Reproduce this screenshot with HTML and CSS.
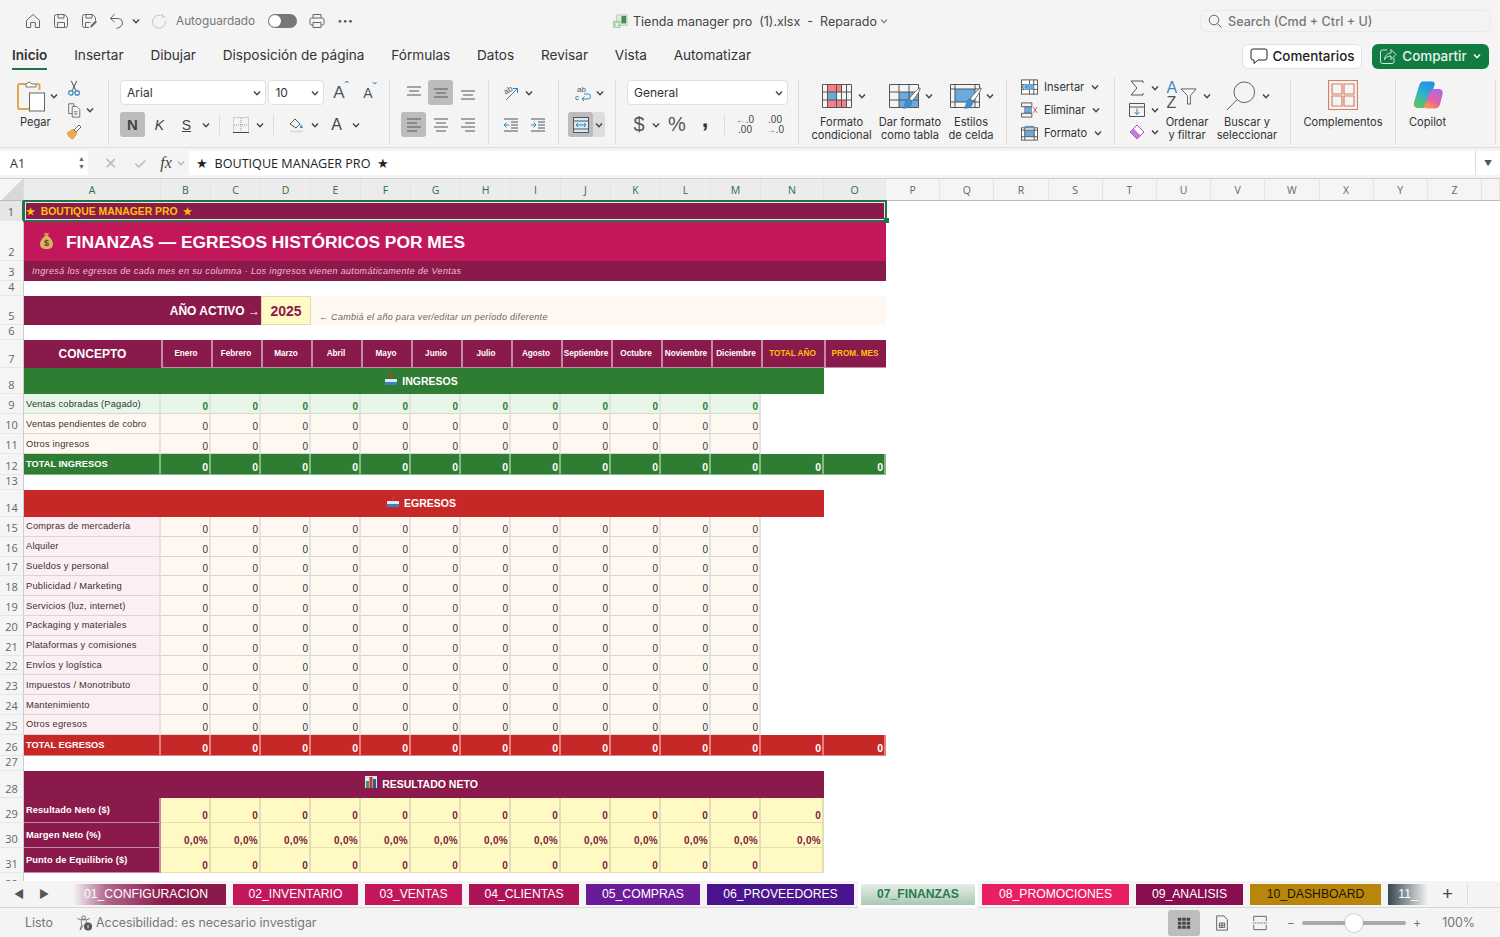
FILE: index.html
```html
<!DOCTYPE html>
<html lang="es">
  <head>
    <meta charset="UTF-8" />
    <title>Tienda manager pro (1).xlsx - Reparado</title>
    <link rel="stylesheet" href="styles.css">
  </head>
  <body>
    <svg class="defs" width="0" height="0">
      <symbol id="ch" viewBox="0 0 10 10"><path d="M2 3.5 5 6.8 8 3.5" fill="none" stroke="#444" stroke-width="1.4"/></symbol>
      <symbol id="al-top" viewBox="0 0 16 16"><path d="M1 2h14M3 6h10M1 10h14" stroke="#555" fill="none"/></symbol>
      <symbol id="al-mid" viewBox="0 0 16 16"><path d="M1 4h14M3 8h10M1 12h14" stroke="#555" fill="none"/></symbol>
      <symbol id="al-bot" viewBox="0 0 16 16"><path d="M1 6h14M3 10h10M1 14h14" stroke="#555" fill="none"/></symbol>
      <symbol id="al-left" viewBox="0 0 16 16"><path d="M1 2h14M1 6h10M1 10h14M1 14h10" stroke="#555" fill="none"/></symbol>
      <symbol id="al-center" viewBox="0 0 16 16"><path d="M1 2h14M3 6h10M1 10h14M3 14h10" stroke="#555" fill="none"/></symbol>
      <symbol id="al-right" viewBox="0 0 16 16"><path d="M1 2h14M5 6h10M1 10h14M5 14h10" stroke="#555" fill="none"/></symbol>
      <symbol id="brush" viewBox="0 0 20 24"><path d="M18 1c1 1-4 9-8 13l-3-2C10 8 16 1 18 1z" fill="#fff" stroke="#666"/><path d="M7 12l3 3c0 4-4 7-9 6 3-2 1-8 6-9z" fill="#3f8fcf" stroke="#3a78b0" stroke-width=".6"/></symbol>
    </svg>

    <header class="titlebar">
      <div class="quick">
        <svg class="ic16" viewBox="0 0 16 16"><path d="M1.5 7.5 8 1.5l6.5 6v7h-4.200v-5H5.700v5H1.500z" fill="none" stroke="#666"/></svg>
        <svg class="ic16" viewBox="0 0 16 16"><path d="M1.500 3.500a2 2 0 0 1 2-2h8l3 3v8a2 2 0 0 1-2 2h-9a2 2 0 0 1-2-2zM5 1.500v3.500h6V1.500M4.500 14.500V9.500h7v5" fill="none" stroke="#666"/></svg>
        <svg class="ic16" viewBox="0 0 16 16"><path d="M8 14.500H3.500a2 2 0 0 1-2-2v-9a2 2 0 0 1 2-2h8l3 3v3M5 1.500v3.500h6V1.500M4.500 14V9.500h5" fill="none" stroke="#666"/><path d="M9 15l1-3 4.500-4.500 1.500 1.500-4.500 4.500z" fill="#666"/></svg>
        <svg class="ic16 undo" viewBox="0 0 16 16"><path d="M5.500 1 1.500 5.500l4 3.500M1.500 5.500h8a4.500 4.500 0 0 1 1.500 8.500l-3.500 1.500" fill="none" stroke="#666"/></svg>
        <svg class="ch"><use href="#ch"/></svg>
        <svg class="ic16 redo" viewBox="0 0 16 16"><path d="M12 3.500A6.500 6.500 0 1 0 14.500 8M11.500 1v3h3" fill="none" stroke="#c4c4c4"/></svg>
        <span class="autosave">Autoguardado</span>
        <span class="toggle"><span class="knob"></span></span>
        <svg class="ic16 print" viewBox="0 0 16 16"><path d="M4 5V1.500h8V5M4 12H2.500a1.500 1.500 0 0 1-1.500-1.500V6.500A1.500 1.500 0 0 1 2.500 5h11A1.500 1.500 0 0 1 15 6.500v4a1.500 1.500 0 0 1-1.500 1.500H12M4 9.500h8v5H4z" fill="none" stroke="#666"/></svg>
        <span class="dots">···</span>
      </div>
      <div class="doc-title">
        <svg class="xl" viewBox="0 0 16 16"><rect x="4" y="1" width="11" height="11" fill="#dfe9df" stroke="#9ab59f" stroke-width=".6"/><rect x="9" y="2" width="5" height="8" fill="#3d8f58"/><rect x="0" y="7" width="8" height="8" fill="#a7d3b0"/><text x="2" y="14" class="xl-x">x</text></svg>
        <span>Tienda manager pro&nbsp; (1).xlsx&nbsp; -&nbsp; Reparado</span>
        <svg class="ch title-ch"><use href="#ch"/></svg>
      </div>
      <div class="search">
        <svg class="ic14" viewBox="0 0 14 14"><circle cx="6" cy="6" r="4.800" fill="none" stroke="#666"/><path d="m9.500 9.500 4 4" stroke="#666"/></svg>
        Search (Cmd + Ctrl + U)
      </div>
    </header>

    <nav class="menubar">
      <a class="on">Inicio</a>
      <a>Insertar</a>
      <a>Dibujar</a>
      <a>Disposición de página</a>
      <a>Fórmulas</a>
      <a>Datos</a>
      <a>Revisar</a>
      <a>Vista</a>
      <a>Automatizar</a>
      <div class="share">
        <button class="comments">
          <svg class="ic18" viewBox="0 0 18 18"><path d="M3 2h12a2 2 0 0 1 2 2v7a2 2 0 0 1-2 2H8l-4 3.500V13H3a2 2 0 0 1-2-2V4a2 2 0 0 1 2-2z" fill="none" stroke="#222"/></svg>
          Comentarios
        </button>
        <button class="compartir">
          <svg class="ic18" viewBox="0 0 18 18"><path d="M8 3H3.500A2 2 0 0 0 1.500 5v9.500a2 2 0 0 0 2 2H13a2 2 0 0 0 2-2V11M5.500 12.500C6 8 9 6 12 6V2.500l5 5-5 5V9c-3 0-5 1-6.500 3.500z" fill="none" stroke="#d6ebdd"/></svg>
          Compartir
          <svg class="ch light"><use href="#ch"/></svg>
        </button>
      </div>
    </nav>

    <section class="ribbon">
      <div class="grp g-clip">
        <div class="paste">
          <div class="paste-top">
            <svg class="ic30" viewBox="0 0 30 32"><path d="M10 4H3.500A1.500 1.500 0 0 0 2 5.500v22A1.500 1.500 0 0 0 3.500 29H13" fill="none" stroke="#e2a64f" stroke-width="2"/><path d="M10 7V4l3-2 3 2h4v3z" fill="#fff" stroke="#777"/><path d="M20 4h2a1.500 1.500 0 0 1 1.500 1.500V10" fill="none" stroke="#e2a64f" stroke-width="2"/><rect x="13.500" y="13" width="15" height="18" fill="#fff" stroke="#666"/></svg>
            <svg class="ch"><use href="#ch"/></svg>
          </div>
          <span>Pegar</span>
        </div>
        <div class="clip-tools">
          <svg class="ic16" viewBox="0 0 16 18"><path d="M5 1l5 11M11 1 6 12" stroke="#444" fill="none"/><circle cx="4.500" cy="14.500" r="2.500" fill="none" stroke="#2f86b8" stroke-width="1.300"/><circle cx="11.500" cy="14.500" r="2.500" fill="none" stroke="#2f86b8" stroke-width="1.300"/></svg>
          <div class="tool-row">
            <svg class="ic16" viewBox="0 0 16 18"><path d="M6 13H2V2h6v3" fill="none" stroke="#666"/><path d="M6 5h5l3.500 3.500V17H6zM8 11h4M8 13.500h4" fill="none" stroke="#666"/></svg>
            <svg class="ch"><use href="#ch"/></svg>
          </div>
          <svg class="ic16" viewBox="0 0 16 16"><path d="M1 9l6-4 4 4-4 6C5 15 2 12 1 9z" fill="#f0a94b" stroke="#d08a2e" stroke-width=".6"/><path d="M8 6l5-5 2 2-5 5z" fill="#fff" stroke="#666"/></svg>
        </div>
      </div>

      <div class="grp g-font">
        <div class="r">
          <div class="select s-font">Arial<svg class="ch"><use href="#ch"/></svg></div>
          <div class="select s-size">10<svg class="ch"><use href="#ch"/></svg></div>
          <span class="grow">A<sup>ˆ</sup></span>
          <span class="grow small">A<sup>ˇ</sup></span>
        </div>
        <div class="r">
          <span class="t active letter">N</span>
          <span class="t letter it">K</span>
          <span class="t letter und">S</span>
          <svg class="ch"><use href="#ch"/></svg>
          <i class="vsep"></i>
          <span class="t"><svg class="ic16" viewBox="0 0 16 16"><path d="M.5.500h15v15H.5z" fill="none" stroke="#aaa" stroke-dasharray="1 1"/><path d="M8 1v14M1 8h14" stroke="#999" stroke-dasharray="1 1"/><path d="M0 15.500h16" stroke="#444"/></svg></span>
          <svg class="ch"><use href="#ch"/></svg>
          <i class="vsep wide"></i>
          <span class="t fill"><svg class="ic16" viewBox="0 0 16 16"><path d="M1 7l5-5 5 5-4 4z" fill="none" stroke="#555"/><path d="M12 7l2 4h-3z" fill="#2f86b8"/><path d="M1 14.500h13" stroke="#ddd" stroke-width="2"/></svg></span>
          <svg class="ch"><use href="#ch"/></svg>
          <span class="t letter color-a">A</span>
          <svg class="ch"><use href="#ch"/></svg>
        </div>
      </div>

      <div class="grp g-align">
        <div class="r">
          <span class="t"><svg class="ic16"><use href="#al-top"/></svg></span>
          <span class="t active"><svg class="ic16"><use href="#al-mid"/></svg></span>
          <span class="t"><svg class="ic16"><use href="#al-bot"/></svg></span>
        </div>
        <div class="r">
          <span class="t active"><svg class="ic16"><use href="#al-left"/></svg></span>
          <span class="t"><svg class="ic16"><use href="#al-center"/></svg></span>
          <span class="t"><svg class="ic16"><use href="#al-right"/></svg></span>
        </div>
      </div>

      <div class="grp g-orient">
        <div class="r">
          <svg class="ic16 free" viewBox="0 0 16 16"><text x="1" y="8" class="mini rot">ab</text><path d="M3 15 14 4M10 3.500h4.500V8" fill="none" stroke="#2f86b8"/></svg>
          <svg class="ch"><use href="#ch"/></svg>
        </div>
        <div class="r">
          <svg class="ic16" viewBox="0 0 16 16"><path d="M1 2h14M1 14h14M8 5h7M8 8h7M8 11h7" stroke="#555" fill="none"/><path d="M6 8H1M3.500 5.500 1 8l2.500 2.500" stroke="#2f86b8" fill="none"/></svg>
          <svg class="ic16" viewBox="0 0 16 16"><path d="M1 2h14M1 14h14M8 5h7M8 8h7M8 11h7" stroke="#555" fill="none"/><path d="M1 8h5M3.500 5.500 6 8l-2.500 2.500" stroke="#2f86b8" fill="none"/></svg>
        </div>
      </div>

      <div class="grp g-wrap">
        <div class="r">
          <svg class="ic16" viewBox="0 0 16 16"><text x="2" y="7" class="mini">ab</text><text x="0" y="15" class="mini">c</text><path d="M9 9h4a2 2 0 0 1 0 5H7M9.500 11.500 7 14l2.500 2.500" fill="none" stroke="#2f86b8"/></svg>
          <svg class="ch"><use href="#ch"/></svg>
        </div>
        <div class="r merge">
          <span class="t active"><svg class="ic16" viewBox="0 0 16 16"><rect x=".5" y=".5" width="15" height="15" fill="#d7ebf7" stroke="#555"/><path d="M1 4h14M1 12h14" stroke="#555"/><path d="M3 8h10M5 6 3 8l2 2M11 6l2 2-2 2" fill="none" stroke="#2f86b8"/></svg></span>
          <span class="merge-ch"><svg class="ch"><use href="#ch"/></svg></span>
        </div>
      </div>

      <div class="grp g-num">
        <div class="r">
          <div class="select s-num">General<svg class="ch"><use href="#ch"/></svg></div>
        </div>
        <div class="r num-tools">
          <span class="t letter big">$</span>
          <svg class="ch"><use href="#ch"/></svg>
          <span class="t letter big pct">%</span>
          <span class="t letter big comma">,</span>
          <i class="vsep"></i>
          <span class="dec"><b>←</b>.0<br>.00</span>
          <span class="dec">.00<br><b>→</b>.0</span>
        </div>
      </div>

      <div class="grp g-styles">
        <div class="big-tool tool-cond">
          <div class="big-top">
            <svg class="ic-w30" viewBox="0 0 30 24"><rect x="5" y="1" width="14" height="7" fill="#f47f86"/><rect x="5" y="16" width="20" height="7" fill="#f47f86"/><rect x="5" y="8" width="10" height="8" fill="#6ba9e0"/><path d="M.5.500h29v23H.5zM5.500 0v24M14.500 0v24M19.500 0v24M24.500 0v24M0 8h30M0 16h30" fill="none" stroke="#555"/></svg>
            <svg class="ch"><use href="#ch"/></svg>
          </div>
          <span>Formato<br>condicional</span>
        </div>
        <div class="big-tool tool-table">
          <div class="big-top">
            <div class="ic-wrap">
              <svg class="ic-w30" viewBox="0 0 30 24"><rect x="10" y="8" width="20" height="15" fill="#6ba9e0"/><path d="M.5.500h29v23H.5zM10 0v24M20 0v24M0 8h30M0 16h30" fill="none" stroke="#555"/></svg>
              <svg class="brush"><use href="#brush"/></svg>
            </div>
            <svg class="ch"><use href="#ch"/></svg>
          </div>
          <span>Dar formato<br>como tabla</span>
        </div>
        <div class="big-tool tool-cell">
          <div class="big-top">
            <div class="ic-wrap">
              <svg class="ic-w30" viewBox="0 0 30 24"><rect x="5" y="5" width="20" height="13" fill="#6ba9e0"/><path d="M.5.500h29v23H.5zM0 5h30M0 18h30M5 0v24M25 0v24" fill="none" stroke="#555"/></svg>
              <svg class="brush"><use href="#brush"/></svg>
            </div>
            <svg class="ch"><use href="#ch"/></svg>
          </div>
          <span>Estilos<br>de celda</span>
        </div>
      </div>

      <div class="grp g-cells">
        <div class="cell-tool">
          <svg class="ic17" viewBox="0 0 18 16"><rect x=".5" y=".5" width="17" height="15" fill="#fff" stroke="#555"/><path d="M0 5.500h18M0 10.500h18M9 0v16M13.500 0v16" stroke="#555"/><rect x="4" y="5" width="9" height="6" fill="#6ba9e0"/><path d="M7 8H1M3.500 5.500 1 8l2.500 2.500" stroke="#2f86b8" fill="none"/></svg>
          Insertar<svg class="ch"><use href="#ch"/></svg>
        </div>
        <div class="cell-tool">
          <svg class="ic17" viewBox="0 0 18 16"><path d="M.5.500h11v4H.5zM.5 11.500h11v4H.5zM4 4.500l3 3-3 3" fill="none" stroke="#555"/><rect x="4" y="5" width="7" height="6" fill="#6ba9e0" stroke="#555" stroke-width=".5"/><path d="m13 5 4 6m0-6-4 6" stroke="#d9534f"/></svg>
          Eliminar<svg class="ch"><use href="#ch"/></svg>
        </div>
        <div class="cell-tool">
          <svg class="ic17" viewBox="0 0 18 16"><rect x=".5" y="2.500" width="17" height="13" fill="#fff" stroke="#555"/><rect x="4" y="5" width="10" height="7" fill="#6ba9e0"/><path d="M4 2.500v13M14 2.500v13M.5 5h17M.5 12h17" stroke="#555"/><path d="M4 1h10" stroke="#2f86b8"/></svg>
          Formato<svg class="ch"><use href="#ch"/></svg>
        </div>
      </div>

      <div class="grp g-edit">
        <div class="edit-col">
          <div class="tool-row">
            <svg class="ic16" viewBox="0 0 16 16"><path d="M14 3V1H2l6 7-6 7h12v-2" fill="none" stroke="#555"/></svg>
            <svg class="ch"><use href="#ch"/></svg>
          </div>
          <div class="tool-row">
            <svg class="ic16" viewBox="0 0 16 16"><path d="M.5 1.500h15v13H.5zM.5 5h15" fill="none" stroke="#555"/><path d="M8 6.500v6M5.500 10 8 12.500 10.500 10" fill="none" stroke="#2f86b8"/></svg>
            <svg class="ch"><use href="#ch"/></svg>
          </div>
          <div class="tool-row">
            <svg class="ic16" viewBox="0 0 16 16"><path d="M8 1l7 7-7 7-7-7z" fill="#fff" stroke="#a24bb8"/><path d="M4.500 4.500 1 8l7 7 3.500-3.500z" fill="#c77ad8"/></svg>
            <svg class="ch"><use href="#ch"/></svg>
          </div>
        </div>
        <div class="big-tool tool-sort">
          <div class="big-top">
            <div class="ic-wrap sort">
              <span class="sort-a">A</span><span class="sort-z">Z</span>
              <svg class="funnel" viewBox="0 0 18 18"><path d="M1 1h16l-6 7v9H8V8z" fill="#fff" stroke="#555"/></svg>
            </div>
            <svg class="ch"><use href="#ch"/></svg>
          </div>
          <span>Ordenar<br>y filtrar</span>
        </div>
        <div class="big-tool tool-find">
          <div class="big-top">
            <svg class="ic-w30 tall" viewBox="0 0 32 32"><circle cx="19.500" cy="12" r="11" fill="none" stroke="#555"/><path d="M11.500 20 1 31" stroke="#555"/></svg>
            <svg class="ch"><use href="#ch"/></svg>
          </div>
          <span>Buscar y<br>seleccionar</span>
        </div>
      </div>

      <div class="grp g-addin">
        <div class="big-tool">
          <svg class="ic-w30 tall" viewBox="0 0 30 30"><path d="M.5.500h29v29H.5zM4 4h10v10H4zM16 4h10v10H16zM4 16h10v10H4zM16 16h10v10H16z" fill="none" stroke="#d67f5f" stroke-width="1.200"/></svg>
          <span class="under">Complementos</span>
        </div>
      </div>

      <div class="grp g-copilot">
        <div class="big-tool">
          <svg class="ic-w30 tall" viewBox="0 0 30 30">
            <defs>
              <linearGradient id="cp1" x1="0.7" y1="0" x2="0.2" y2="1"><stop offset="0" stop-color="#1f8fe8"/><stop offset=".5" stop-color="#2fb5c8"/><stop offset="1" stop-color="#62c44f"/></linearGradient>
              <linearGradient id="cp2" x1="0.8" y1="0" x2="0.3" y2="1"><stop offset="0" stop-color="#a66be8"/><stop offset=".6" stop-color="#e85fa8"/><stop offset="1" stop-color="#f7964a"/></linearGradient>
            </defs>
            <path d="M10 1.500h9c2 0 3.200 1.600 2.500 3.500L15 24c-.8 2.500-2.500 4-5 4H5c-3 0-4.800-2.500-4-5.500L6 6c.8-2.500 2-4.500 4-4.500z" fill="url(#cp1)"/>
            <path d="M14 28.500h8c2.500 0 4-1.500 5-4l2.500-10c.8-3-.5-5.500-3.500-5.500h-5c-2 0-3.500 1-4.200 3L11.500 25c-.5 2 .8 3.500 2.500 3.500z" fill="url(#cp2)"/>
          </svg>
          <span class="under">Copilot</span>
        </div>
      </div>
    </section>

    <section class="formula">
      <div class="namebox">A1<span class="spin">▲<br>▼</span></div>
      <div class="fx-tools">
        <span class="x">✕</span>
        <span class="check">✓</span>
        <span class="fx">fx</span>
        <svg class="ch faint"><use href="#ch"/></svg>
      </div>
      <div class="fx-input">★&nbsp; BOUTIQUE MANAGER PRO&nbsp; ★</div>
      <div class="fx-drop">▼</div>
    </section>

    <main class="sheet" id="sheet"></main>

    <section class="tabsbar">
      <div class="tab-nav"><span>◀</span><span>▶</span></div>
      <div class="tabs">
        <a class="tab t01">01_CONFIGURACION</a>
        <a class="tab t02">02_INVENTARIO</a>
        <a class="tab t03">03_VENTAS</a>
        <a class="tab t04">04_CLIENTAS</a>
        <a class="tab t05">05_COMPRAS</a>
        <a class="tab t06">06_PROVEEDORES</a>
        <a class="tab t07">07_FINANZAS</a>
        <a class="tab t08">08_PROMOCIONES</a>
        <a class="tab t09">09_ANALISIS</a>
        <a class="tab t10">10_DASHBOARD</a>
        <a class="tab t11">11_</a>
        <span class="tab-add">+</span>
      </div>
    </section>

    <footer class="statusbar">
      <span class="listo">Listo</span>
      <svg class="ic17" viewBox="0 0 18 18"><circle cx="8" cy="3" r="2" fill="none" stroke="#666"/><path d="M1 4c4 2 10 2 14 0M5 6c1 3 1 5-1 11M11 6c0 2 0 3 0 4M4 17l4-6" fill="none" stroke="#666"/><circle cx="13" cy="13" r="4.500" fill="#555"/><path d="M13 11v4" stroke="#fff"/></svg>
      <span class="a11y">Accesibilidad: es necesario investigar</span>
      <div class="view">
        <span class="view-on"><svg class="ic14" viewBox="0 0 16 14"><path d="M1 1h4v3.500H1zM6 1h4v3.500H6zM11 1h4v3.500h-4zM1 5.500h4V9H1zM6 5.500h4V9H6zM11 5.500h4V9h-4zM1 10h4v3.500H1zM6 10h4v3.500H6zM11 10h4v3.500h-4z" fill="#444"/></svg></span>
        <svg class="ic16 v-page" viewBox="0 0 16 18"><path d="M2 1h8l4 4v12H2z" fill="none" stroke="#555"/><path d="M5 9h6v5H5zM5 11.500h6M8 9v5" fill="none" stroke="#555"/></svg>
        <svg class="ic16 v-break" viewBox="0 0 16 18"><path d="M1 7V1.500h14V7M1 11v5.500h14V11" fill="none" stroke="#555"/><path d="M0 9h16" stroke="#555" stroke-dasharray="1.500 1"/></svg>
      </div>
      <div class="zoom">
        <span>−</span>
        <div class="slider"><span class="thumb"></span></div>
        <span>+</span>
        <span class="pct-val">100%</span>
      </div>
    </footer>

    <script src="script.js"></script>
  </body>
</html>
```

FILE: styles.css
```css
* {
  box-sizing: border-box;
}

html,
body {
  margin: 0;
  height: 937px;
  overflow: hidden;
}

body {
  display: flex;
  flex-direction: column;
  width: 1500px;
  background: #f4f4f4;
  font-family: Inter, "Noto Sans", sans-serif;
  color: #333;
}

.defs {
  position: absolute;
}

svg {
  display: block;
  flex: none;
}

.free {
  overflow: visible;
}

.ch {
  width: 10px;
  height: 10px;
}

.ch.light {
  filter: invert(1) brightness(1.6);
}

.ch.faint {
  opacity: 0.35;
}

.ic14 { width: 14px; height: 14px; }
.ic16 { width: 16px; height: 16px; }
.ic17 { width: 17px; height: 16px; }
.ic18 { width: 18px; height: 18px; }
.ic30 { width: 30px; height: 32px; }
.ic-w30 { width: 30px; height: 24px; }
.ic-w30.tall { width: 30px; height: 30px; }

/* title bar */
.titlebar {
  display: flex;
  align-items: center;
  height: 42px;
  flex: none;
}

.quick {
  display: flex;
  align-items: center;
  width: 613px;
  padding-left: 25px;
  gap: 12px;
}

.quick .ch { margin-left: -6px; }
.redo { margin-left: -2px; }

.autosave {
  font-size: 11.8px;
  color: #777;
  margin-left: -3px;
}

.toggle {
  width: 29px;
  height: 14px;
  border-radius: 7px;
  background: #777;
  padding: 1px;
  margin-left: 1px;
}

.knob {
  display: block;
  width: 12px;
  height: 12px;
  background: #fff;
  border-radius: 50%;
}

.dots {
  font-size: 16px;
  font-weight: 700;
  color: #555;
}

.doc-title {
  display: flex;
  align-items: center;
  gap: 5px;
  width: 587px;
  font-size: 12.5px;
  color: #444;
}

.title-ch {
  margin-left: -3px;
  opacity: 0.6;
}

.xl {
  width: 15px;
  height: 15px;
}

.xl-x {
  font: 700 7px "Liberation Sans", sans-serif;
  fill: #fff;
}

.search {
  display: flex;
  align-items: center;
  gap: 6px;
  width: 291px;
  height: 22px;
  padding-left: 7px;
  border: 1px solid #ebebeb;
  border-radius: 5px;
  font-size: 12.6px;
  font-weight: 500;
  color: #777;
}

/* menu row */
.menubar {
  display: flex;
  align-items: center;
  gap: 26.8px;
  height: 30px;
  padding: 0 0 2px 12px;
  flex: none;
  font-size: 13.6px;
  color: #333;
}

.menubar a {
  display: block;
  line-height: 26px;
  border-bottom: 2px solid transparent;
}

.menubar a.on {
  font-weight: 600;
  border-bottom-color: #217346;
}

.share {
  display: flex;
  gap: 10px;
  margin-left: auto;
  padding-right: 11px;
}

.share button {
  display: flex;
  align-items: center;
  justify-content: center;
  gap: 5px;
  height: 25px;
  font: 500 13.4px Inter, sans-serif;
  border-radius: 6px;
}

.comments {
  width: 120px;
  background: #fff;
  border: 1px solid #e2e2e2;
  color: #222;
}

.compartir {
  width: 117px;
  background: #107c41;
  border: 0;
  color: #e8f3ec;
}

/* ribbon */
.ribbon {
  display: flex;
  height: 76px;
  padding-top: 8px;
  flex: none;
  font-size: 11.1px;
  color: #333;
  border-bottom: 1px solid #ddd;
}

.grp {
  height: 65px;
  border-right: 1px solid #dcdcdc;
  flex: none;
}

.r {
  display: flex;
  align-items: center;
  gap: 2px;
  height: 25px;
  margin-bottom: 7px;
}

.t {
  display: flex;
  align-items: center;
  justify-content: center;
  width: 25px;
  height: 25px;
  border-radius: 3px;
  flex: none;
}

.t.active {
  background: #bcbcbc;
}

.t.fill {
  width: 22px;
}

.letter {
  font: 14px "Liberation Sans", sans-serif;
  color: #444;
}

.letter.it { font-style: italic; }
.letter.und { text-decoration: underline; }
.active.letter { font-weight: 700; font-size: 15px; }
.color-a { font-size: 16px; margin-left: 2px; }

.vsep {
  width: 1px;
  height: 20px;
  background: #dcdcdc;
  margin: 0 6px;
  flex: none;
}

.vsep.wide {
  margin-right: 10px;
}

.select {
  display: flex;
  align-items: center;
  justify-content: space-between;
  height: 25px;
  padding: 0 3px 0 6px;
  background: #fff;
  border: 1px solid #e0e0e0;
  border-radius: 4px;
  font-size: 12px;
}

.s-font { width: 147px; }
.s-size { width: 56px; margin-right: 7px; }
.s-num { width: 161px; }

.grow {
  width: 26px;
  font: 17px "Liberation Sans", sans-serif;
  color: #555;
}

.grow.small {
  font-size: 14px;
  margin-left: 2px;
}

.grow sup {
  font-size: 13px;
  color: #3a8ac0;
  line-height: 0;
}

.g-clip {
  display: flex;
  width: 109px;
  padding-left: 16px;
}

.paste {
  display: flex;
  flex-direction: column;
  gap: 3px;
  width: 50px;
}

.paste span {
  padding-left: 4px;
}

.paste-top,
.big-top,
.tool-row {
  display: flex;
  align-items: center;
  gap: 3px;
}

.clip-tools {
  display: flex;
  flex-direction: column;
  gap: 6px;
}

.g-font { width: 281px; padding-left: 11px; }
.g-align { width: 99px; padding-left: 11px; }
.g-orient { width: 70px; padding-left: 14px; }
.g-orient .r { gap: 5px; }
.g-orient .r + .r { gap: 11px; }
.g-wrap { width: 57px; padding-left: 9px; }
.g-wrap .r:first-child { padding-left: 7px; gap: 4px; }
.merge { gap: 0; }

.merge-ch {
  display: flex;
  align-items: center;
  justify-content: center;
  width: 12px;
  height: 25px;
  background: #dcdcdc;
  border-radius: 0 3px 3px 0;
}

.g-num { width: 183px; padding-left: 11px; }
.num-tools { gap: 0; }
.num-tools .t { width: 24px; }
.big { font-size: 20px; color: #555; }
.num-tools .pct { width: 30px; margin-left: 1px; }
.num-tools .comma { width: 18px; margin-left: 4px; padding-bottom: 12px; font-size: 24px; font-weight: 700; color: #333; }
.num-tools .vsep { margin: 0 6px 0 10px; }

.dec {
  width: 28px;
  font: 10px/10px "Liberation Sans", sans-serif;
  text-align: center;
  color: #444;
}

.dec + .dec {
  margin-left: 2px;
}

.dec b {
  color: #2f86b8;
  font-weight: 400;
}

.g-styles {
  display: flex;
  width: 208px;
  padding-left: 10px;
}

.big-tool {
  display: flex;
  flex-direction: column;
  align-items: center;
  text-align: center;
  line-height: 12.5px;
}

.big-tool .big-top {
  height: 32px;
  gap: 5px;
}

.big-tool > span {
  margin-top: 4px;
}

.tool-cond { width: 65px; }
.tool-cond .big-top { padding-left: 6px; }
.tool-table { width: 72px; }
.tool-table .big-top { padding-left: 3px; }
.tool-cell { width: 50px; }
.tool-cell .big-top { padding-left: 3px; }

.ic-wrap {
  position: relative;
}

.brush {
  position: absolute;
  right: -3px;
  bottom: -3px;
  width: 20px;
  height: 24px;
}

.g-cells {
  display: flex;
  flex-direction: column;
  gap: 6px;
  width: 108px;
  padding-left: 14px;
  margin-top: -2px;
  height: 67px;
}

.cell-tool {
  display: flex;
  align-items: center;
  gap: 6px;
  height: 17px;
}

.g-edit {
  display: flex;
  width: 176px;
  padding-left: 14px;
}

.edit-col {
  display: flex;
  flex-direction: column;
  gap: 6px;
  width: 32px;
}

.edit-col .tool-row { gap: 5px; }
.tool-sort { width: 52px; }
.tool-sort .big-top { padding-left: 4px; }
.tool-find { width: 68px; }
.tool-find .big-top { padding-left: 2px; }

.sort {
  width: 30px;
  height: 30px;
  font-family: "Liberation Sans", sans-serif;
}

.sort-a,
.sort-z {
  position: absolute;
  left: 0;
  font-size: 16px;
  line-height: 16px;
}

.sort-a { top: -1px; color: #3a8ac0; }
.sort-z { top: 14px; color: #555; }

.funnel {
  position: absolute;
  left: 13px;
  top: 7px;
  width: 17px;
  height: 17px;
}

.g-addin { width: 105px; }
.g-copilot { width: 100px; }
.g-addin .big-tool { width: 100%; }
.g-copilot .big-tool { width: 63px; }

.big-tool > .under {
  margin-top: 6px;
}

/* formula bar */
.formula {
  display: flex;
  align-items: center;
  height: 31px;
  flex: none;
  border-bottom: 1px solid #cfcfcf;
}

.namebox {
  display: flex;
  align-items: center;
  justify-content: space-between;
  width: 88px;
  height: 24px;
  padding: 0 3px 0 10px;
  background: #fff;
  font: 12.5px "Open Sans", sans-serif;
}

.spin {
  font-size: 7px;
  line-height: 8px;
  color: #666;
}

.fx-tools {
  display: flex;
  align-items: center;
  gap: 14px;
  width: 101px;
  padding-left: 14px;
  color: #bbb;
  font-size: 16px;
}

.fx-tools span {
  width: 16px;
  text-align: center;
}

.fx-tools .fx {
  font: italic 16px "Liberation Serif", serif;
  color: #444;
  margin-left: -4px;
}

.fx-tools .ch {
  margin-left: -12px;
}

.fx-input {
  display: flex;
  align-items: center;
  flex: 1;
  height: 24px;
  padding-left: 7px;
  background: #fff;
  font: 12.6px "Open Sans", sans-serif;
  color: #222;
}

.fx-drop {
  display: flex;
  align-items: center;
  justify-content: center;
  width: 25px;
  height: 24px;
  background: #fff;
  border-left: 1px solid #ddd;
  font-size: 8px;
  color: #555;
}

/* sheet */
.sheet {
  display: grid;
  flex: none;
  height: 702px;
  overflow: hidden;
  background: #fff;
  grid-template-columns: 24px 137px repeat(12, 50px) 63px 62px repeat(11, 54.2px) 18px;
  grid-template-rows:
    22px 20px 40px 20px 15px 29px 15px 28px 26px
    20px 20px 20px 21px 15px 27px
    19.8px 19.8px 19.8px 19.8px 19.8px 19.8px 19.8px 19.8px 19.8px 19.8px 19.8px
    21px 15px 27px 25px 25px 25px 20px;
  font-family: "Liberation Sans", sans-serif;
}

.corner,
.col,
.rh {
  background: #f5f5f5;
  font-family: "Open Sans", sans-serif;
  color: #666;
}

.corner {
  grid-column: 1;
  border-right: 1px solid #ddd;
  border-bottom: 1px solid #bbb;
  background: linear-gradient(135deg, #f5f5f5 50%, #d8d8d8 50%);
}

.col {
  display: flex;
  align-items: center;
  justify-content: center;
  font-size: 10.5px;
  border-right: 1px solid #e4e4e4;
  border-bottom: 1px solid #bbb;
}

.col.sel {
  background: #ececec;
  color: #2f6b45;
}

.rh {
  grid-column: 1;
  display: flex;
  align-items: flex-end;
  justify-content: center;
  padding-bottom: 1px;
  font-size: 11px;
  line-height: 14px;
  border-right: 1px solid #ccc;
  border-bottom: 1px solid #e6e6e6;
}

.rh.sel {
  background: #e6e6e6;
  color: #2f6b45;
  border-right: 2px solid #217346;
}

.cell {
  display: flex;
  align-items: flex-end;
  justify-content: flex-end;
  overflow: hidden;
  white-space: nowrap;
}

.span-3 { grid-column: span 3; }
.span-11 { grid-column: span 11; }
.span-14 { grid-column: span 14; }
.span-15 { grid-column: span 15; }

.num {
  padding-right: 1px;
  font-size: 10px;
  line-height: 13px;
  border-right: 2px solid #e6e3de;
  border-bottom: 1px solid #d9d6d1;
}

.label {
  align-items: center;
  justify-content: flex-start;
  padding-left: 2px;
  font-size: 9.3px;
  letter-spacing: 0.2px;
  color: #333;
  border-right: 2px solid #e6e3de;
  border-bottom: 1px solid #d9d6d1;
}

.cream { background: #fff8f0; color: #333; }
.rose { background: #fdeef4; }
.mint { background: #e8f5e9; color: #2e7d32; font-weight: 700; }
.mint-label { background: #e8f5e9; }
.yellow { background: #fff9c4; color: #7b1c3c; font-weight: 700; letter-spacing: 0.3px; border-color: #e3dfb4; }
.green { background: #2e7d32; color: #fff; font-weight: 700; border-color: #82b885; font-size: 10.5px; }
.red { background: #c62828; color: #fff; font-weight: 700; border-color: #e38080; font-size: 10.5px; }
.maroon { background: #8a1a4b; color: #fff; }
.label.maroon { font-weight: 700; border-color: #c48aa5; letter-spacing: 0.1px; }
.label.green,
.label.red { font-size: 9.3px; letter-spacing: 0; }

.banner-top {
  position: relative;
  overflow: visible;
  justify-content: flex-start;
  align-items: center;
  padding-left: 2px;
  color: #ffc107;
  font-size: 10.4px;
  font-weight: 700;
}

.selection {
  position: absolute;
  inset: -1px;
  border: 2px solid #217346;
  box-shadow: inset 0 0 0 1px #e8e8e8;
}

.handle {
  position: absolute;
  right: -4px;
  bottom: -3px;
  width: 5px;
  height: 5px;
  background: #217346;
}

.banner-main {
  justify-content: flex-start;
  align-items: center;
  padding: 2px 0 0 16px;
  background: #c2185b;
  color: #fff;
  font-size: 17.4px;
  font-weight: 700;
  gap: 13px;
}

.banner-main svg {
  width: 13px;
  height: 17px;
  margin-top: -3px;
}

.banner-sub {
  justify-content: flex-start;
  align-items: center;
  padding-left: 8px;
  background: #8a1a4b;
  color: #f8bbd0;
  font-size: 9px;
  font-style: italic;
  letter-spacing: 0.36px;
}

.year-label {
  align-items: center;
  padding-right: 1px;
  background: #8a1a4b;
  color: #fff;
  font-size: 12px;
  font-weight: 700;
}

.year {
  align-items: center;
  justify-content: center;
  background: #fff9c4;
  color: #8a1a4b;
  font-size: 14px;
  font-weight: 700;
  border: 1px solid #e0dcae;
}

.year-note {
  justify-content: flex-start;
  padding: 0 0 3px 8px;
  background: #fff8f0;
  color: #666;
  font-size: 9px;
  font-style: italic;
  letter-spacing: 0.3px;
}

.concept {
  align-items: center;
  justify-content: center;
  background: #8a1a4b;
  color: #fff;
  font-size: 12px;
  font-weight: 700;
}

.month {
  align-items: center;
  justify-content: center;
  padding-right: 2px;
  background: #8a1a4b;
  color: #fff;
  font-size: 8.2px;
  font-weight: 700;
  border-left: 2px solid #c48aa5;
  border-bottom: 1px solid #c48aa5;
}

.month.gold {
  color: #ffc107;
}

.section {
  align-items: center;
  justify-content: center;
  gap: 5px;
  padding: 0 5px 1px 0;
  color: #fff;
  font-size: 10.5px;
  font-weight: 700;
}

.section svg {
  width: 12px;
  height: 12px;
  margin-top: -4px;
}

.section.green { background: #2e7d32; }
.section.red { background: #c62828; }
.section.maroon { background: #8a1a4b; }

/* sheet tabs */
.tabsbar {
  display: flex;
  align-items: center;
  height: 27px;
  flex: none;
  background: #f4f4f4;
  border-bottom: 1px solid #d8d8d8;
}

.tab-nav {
  display: flex;
  gap: 15px;
  width: 73px;
  padding-left: 14px;
  font-size: 11px;
  color: #555;
}

.tabs {
  display: flex;
  align-items: center;
  gap: 7px;
  font: 12.2px "Liberation Sans", sans-serif;
}

.tab {
  display: flex;
  align-items: center;
  justify-content: center;
  height: 21px;
  color: #fff;
}

.t01 { width: 153px; padding-right: 7px; background: linear-gradient(90deg, #f4f4f4 0, #b0668c 22%, #8a1a4b 60%); }
.t02 { width: 125px; background: #c2185b; }
.t03 { width: 97px; background: #c2185b; }
.t04 { width: 110px; background: #ad1457; }
.t05 { width: 114px; background: #6a1b9a; }
.t06 { width: 147px; background: #4a148c; }
.t07 { width: 114px; background: linear-gradient(#e6efe8, #a9c8b3); color: #2a7a4c; font-weight: 700; box-shadow: 0 0 0 3px #fff; }
.t08 { width: 147px; background: #e91e63; }
.t09 { width: 107px; background: #880e4f; }
.t10 { width: 131px; background: #b8860b; color: #1c1500; }
.t11 { width: 40px; background: linear-gradient(90deg, #37474f, #f4f4f4); }

.tab-add {
  width: 40px;
  margin-left: -7px;
  text-align: center;
  font-size: 18px;
  color: #444;
  border-right: 1px solid #ddd;
}

/* status bar */
.statusbar {
  display: flex;
  align-items: center;
  flex: 1;
  padding-left: 25px;
  font-size: 12.4px;
  color: #777;
}

.listo { width: 51px; }
.a11y { margin-left: 3px; }

.view {
  display: flex;
  align-items: center;
  margin-left: auto;
}

.view-on {
  display: flex;
  align-items: center;
  justify-content: center;
  width: 32px;
  height: 26px;
  background: #bdbdbd;
  border-radius: 3px;
}

.v-page { margin-left: 14px; }
.v-break { margin-left: 22px; }

.zoom {
  display: flex;
  align-items: center;
  gap: 7px;
  margin-left: 19px;
  padding-right: 25px;
}

.slider {
  position: relative;
  width: 104px;
  height: 4px;
  background: #aaa;
  border-radius: 2px;
}

.thumb {
  position: absolute;
  left: 43px;
  top: -7px;
  width: 18px;
  height: 18px;
  background: #fff;
  border-radius: 50%;
  box-shadow: 0 0 2px #999;
}

.pct-val {
  margin-left: 14px;
}

.mini {
  font: 8px "Liberation Sans", sans-serif;
  fill: #555;
}

.rot {
  transform: rotate(-30deg);
  transform-origin: 5px 6px;
}
```

FILE: script.js
```js
// builds the worksheet grid, most of the rows are the same zeros
const sheet = document.getElementById("sheet");
let html = "";

const months = ["Enero", "Febrero", "Marzo", "Abril", "Mayo", "Junio", "Julio", "Agosto", "Septiembre", "Octubre", "Noviembre", "Diciembre"];
const letters = "ABCDEFGHIJKLMNOPQRSTUVWXYZ".split("");

const bag = '<svg viewBox="0 0 13 17"><path d="M4 1h5L8 4H5z" fill="#c99a3e"/><path d="M5 4h3c3 2 5 5 5 8 0 3-2 5-6.500 5S0 15 0 12c0-3 2-6 5-8z" fill="#d9b365"/><text x="4" y="14" font-size="9" font-weight="700" fill="#5c4413">$</text></svg>';
const tray = (c) => `<svg viewBox="0 0 12 12"><path d="M6 0v5" stroke="${c}" stroke-width="2.500"/><path d="M0 6h12v6H0z" fill="#dce9f5"/><path d="M0 9h12v3H0z" fill="#3f7fc0"/></svg>`;
const chart = '<svg viewBox="0 0 12 12"><rect width="12" height="12" fill="#dfe5ea"/><rect x="1" y="5" width="3" height="7" fill="#3a9a55"/><rect x="4.500" y="1" width="3" height="11" fill="#c0392b"/><rect x="8" y="3" width="3" height="9" fill="#2a5f9e"/></svg>';

function rowHead(n) {
  html += `<div class="rh${n === 1 ? " sel" : ""}">${n}</div>`;
}

function numbers(count, style, text = "0") {
  for (let i = 0; i < count; i++) {
    html += `<div class="cell num ${style}">${text}</div>`;
  }
}

function dataRow(n, label, labelStyle, style, count) {
  rowHead(n);
  html += `<div class="cell label ${labelStyle}">${label}</div>`;
  numbers(count, style);
}

function sectionRow(n, style, icon, text) {
  rowHead(n);
  html += `<div class="cell section span-14 ${style}">${icon}${text}</div>`;
}

// column letters
html += '<div class="corner"></div>';
letters.forEach((l, i) => {
  html += `<div class="col${i < 15 ? " sel" : ""}">${l}</div>`;
});
html += '<div class="col"></div>';

rowHead(1);
html += '<div class="cell banner-top maroon span-15">★&nbsp; BOUTIQUE MANAGER PRO&nbsp; ★<span class="selection"><span class="handle"></span></span></div>';
rowHead(2);
html += `<div class="cell banner-main span-15">${bag}FINANZAS — EGRESOS HISTÓRICOS POR MES</div>`;
rowHead(3);
html += '<div class="cell banner-sub span-15">Ingresá los egresos de cada mes en su columna · Los ingresos vienen automáticamente de Ventas</div>';
rowHead(4);

rowHead(5);
html += '<div class="cell year-label span-3">AÑO ACTIVO →</div>';
html += '<div class="cell year">2025</div>';
html += '<div class="cell year-note span-11">← Cambiá el año para ver/editar un período diferente</div>';
rowHead(6);

rowHead(7);
html += '<div class="cell concept">CONCEPTO</div>';
months.forEach((m) => {
  html += `<div class="cell month">${m}</div>`;
});
html += '<div class="cell month gold">TOTAL AÑO</div><div class="cell month gold">PROM. MES</div>';

sectionRow(8, "green", tray("#c0392b"), "INGRESOS");
dataRow(9, "Ventas cobradas (Pagado)", "mint-label", "mint", 12);
dataRow(10, "Ventas pendientes de cobro", "cream", "cream", 12);
dataRow(11, "Otros ingresos", "cream", "cream", 12);
dataRow(12, "TOTAL INGRESOS", "green", "green", 14);
rowHead(13);

sectionRow(14, "red", tray("#c0392b"), "EGRESOS");
const egresos = ["Compras de mercadería", "Alquiler", "Sueldos y personal", "Publicidad / Marketing", "Servicios (luz, internet)", "Packaging y materiales", "Plataformas y comisiones", "Envíos y logística", "Impuestos / Monotributo", "Mantenimiento", "Otros egresos"];
egresos.forEach((name, i) => dataRow(15 + i, name, "rose", "cream", 12));
dataRow(26, "TOTAL EGRESOS", "red", "red", 14);
rowHead(27);

sectionRow(28, "maroon", chart, "RESULTADO NETO");
dataRow(29, "Resultado Neto ($)", "maroon", "yellow", 13);
rowHead(30);
html += '<div class="cell label maroon">Margen Neto (%)</div>';
numbers(13, "yellow", "0,0%");
dataRow(31, "Punto de Equilibrio ($)", "maroon", "yellow", 12);
numbers(1, "yellow", "");
rowHead(32);

sheet.innerHTML = html;
```
